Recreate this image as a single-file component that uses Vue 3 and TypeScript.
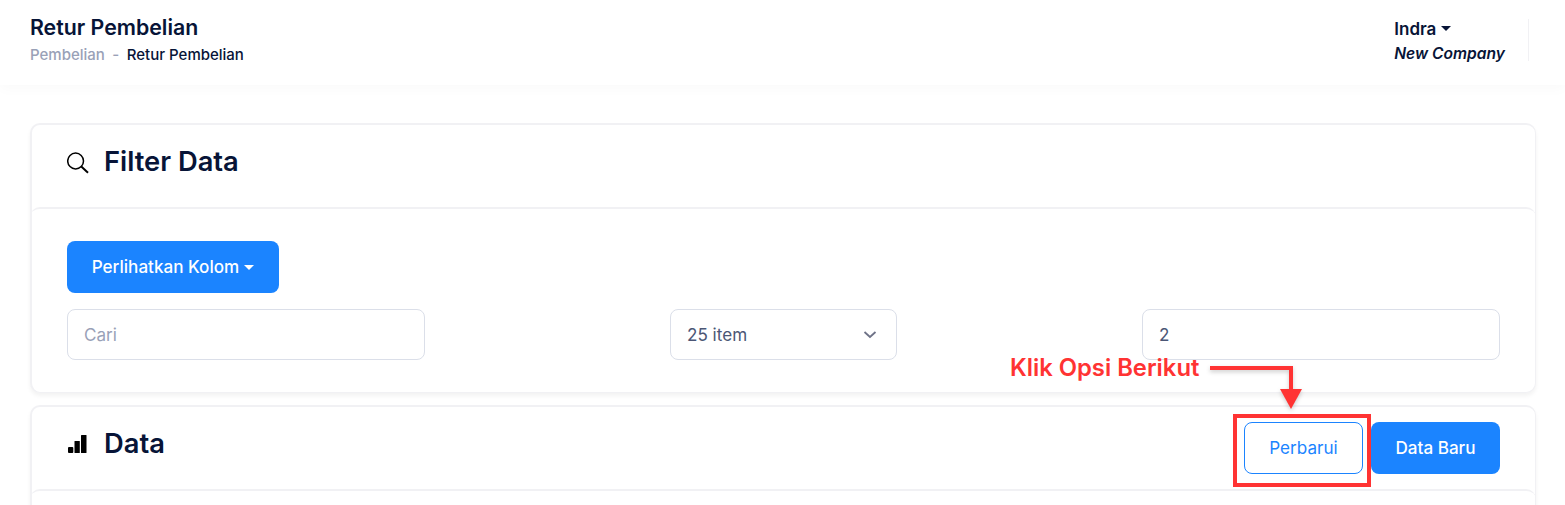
<script setup lang="ts">
import { ref } from "vue";

const search = ref("");
const page = ref("2");
</script>

<template>
  <div class="page">
    <header class="topbar">
      <div class="heading">
        <h1 class="page-title">Retur Pembelian</h1>
        <div class="crumbs">
          <span class="crumb-muted">Pembelian</span>
          <span class="crumb-dash">-</span>
          <span class="crumb-current">Retur Pembelian</span>
        </div>
      </div>
      <div class="account">
        <div class="account-text">
          <div class="user">Indra<i class="caret"></i></div>
          <div class="company">New Company</div>
        </div>
      </div>
    </header>

    <main class="content">
      <section class="card">
        <div class="card-head">
          <div class="card-title">
            <svg class="icon" width="24" height="24" viewBox="0 0 24 24" fill="none">
              <circle cx="8.600" cy="11" r="7.900" stroke="#000" stroke-width="1.500" />
              <path d="M14.300 16.600 L21 22.800" stroke="#000" stroke-width="2" />
            </svg>
            <h2>Filter Data</h2>
          </div>
        </div>
        <div class="card-body">
          <button class="btn btn-primary btn-columns">Perlihatkan Kolom<i class="caret caret-white"></i></button>
          <div class="filters">
            <input v-model="search" class="field field-wide" placeholder="Cari" />
            <div class="field field-select">
              <span>25 item</span>
              <svg width="16" height="16" viewBox="0 0 16 16" fill="none">
                <path d="M2.500 5 L8 10 L13.500 5" stroke="#6e7287" stroke-width="1.800" />
              </svg>
            </div>
            <input v-model="page" class="field field-wide" />
          </div>
        </div>
      </section>

      <section class="card card-data">
        <div class="card-head card-head-data">
          <div class="card-title">
            <svg class="icon" width="24" height="24" viewBox="0 0 24 24" fill="#000">
              <rect x="1" y="15" width="5.300" height="6" rx="1" />
              <rect x="7.500" y="9" width="5.300" height="12" rx="0.500" />
              <rect x="14" y="3" width="5.500" height="18" rx="0.500" />
            </svg>
            <h2>Data</h2>
          </div>
          <div class="actions">
            <button class="btn btn-outline">Perbarui</button>
            <button class="btn btn-primary btn-new">Data Baru</button>
          </div>
        </div>
        <div class="card-body card-body-data"></div>
      </section>
    </main>

    <!-- tutorial annotation drawn over the page -->
    <div class="note">Klik Opsi Berikut</div>
    <svg class="note-arrow" width="100" height="60" viewBox="0 0 100 60" fill="none">
      <path d="M3 11 H84 V34" stroke="#ff3333" stroke-width="4" />
      <path d="M73 32 H95 L84 52 Z" fill="#ff3333" />
    </svg>
    <div class="note-box"></div>
  </div>
</template>

<style>
html,
body {
  margin: 0;
  background: #fff;
  overflow: hidden;
}
</style>

<style scoped>
.page {
  position: relative;
  width: 1565px;
  height: 505px;
  overflow: hidden;
  font-family: Inter, "Liberation Sans", sans-serif;
  color: #071437;
  background: #fff;
}

.topbar {
  box-sizing: border-box;
  height: 85px;
  padding: 15px 36px 0 30px;
  display: flex;
  justify-content: space-between;
  align-items: flex-start;
  background: #fff;
  box-shadow: 0 4px 12px rgba(0, 0, 0, 0.025);
}

.page-title {
  margin: 0;
  font-size: 21.300px;
  line-height: 24px;
  font-weight: 600;
}

.crumbs {
  margin-top: 7px;
  display: flex;
  gap: 7.500px;
  font-size: 15px;
  line-height: 17px;
  font-weight: 500;
}

.crumb-muted,
.crumb-dash {
  color: #99a1b7;
}

.account {
  margin-top: 4px;
  height: 42px;
  padding-right: 23px;
  border-right: 1px solid #f1f1f4;
}

.user {
  font-size: 17px;
  line-height: 20px;
  font-weight: 600;
}

.company {
  margin-top: 5px;
  font-size: 15.600px;
  line-height: 20px;
  font-weight: 600;
  font-style: italic;
}

.caret {
  display: inline-block;
  margin-left: 5px;
  vertical-align: 4px;
  border-top: 5px solid #071437;
  border-left: 5px solid transparent;
  border-right: 5px solid transparent;
}

.caret-white {
  margin-left: 5px;
  vertical-align: 3px;
  border-top-color: #fff;
}

.content {
  padding: 38px 29px 0 30px;
  display: flex;
  flex-direction: column;
  gap: 12px;
}

.card {
  border: 1px solid #f1f1f4;
  border-width: 2px 1px 1px 2px;
  border-radius: 10px;
  background: #fff;
  box-shadow: 0 3px 4px rgba(0, 0, 0, 0.05);
}

.card-head {
  box-sizing: border-box;
  height: 82px;
  padding: 0 35px 9px 35px;
  display: flex;
  align-items: center;
}

.card-head-data {
  justify-content: space-between;
  align-items: flex-start;
  padding: 15px 35px 0 35px;
}

.card-title {
  display: flex;
  align-items: center;
  gap: 13px;
}

.card-head-data .card-title {
  margin-top: 7px;
}

.card-title h2 {
  margin: 0;
  font-size: 27.300px;
  line-height: 30px;
  font-weight: 600;
  color: #071437;
}

.icon {
  flex-shrink: 0;
}

.card-body {
  box-sizing: border-box;
  height: 185px;
  margin: 0 -1px 0 -2px;
  padding: 32px 36px 0 37px;
  border-top: 2px solid #f1f1f4;
  border-radius: 10px;
}

.card-body-data {
  height: 40px;
}

.btn {
  box-sizing: border-box;
  height: 52px;
  padding: 0 0 2px;
  border: 0;
  border-radius: 8px;
  font-family: inherit;
  font-size: 17.100px;
  font-weight: 500;
}

.btn-primary {
  color: #fff;
  background: #1b84ff;
}

.btn-columns {
  display: block;
  width: 212px;
}

.filters {
  margin-top: 16px;
  display: flex;
  justify-content: space-between;
}

.field {
  box-sizing: border-box;
  height: 51px;
  padding: 0 16px;
  border: 1px solid #dbdfe9;
  border-radius: 8px;
  background: #fff;
  font-family: inherit;
  font-size: 17.100px;
  font-weight: 400;
  color: #4b5675;
  outline: none;
}

.field::placeholder {
  color: #99a1b7;
  opacity: 1;
}

.field-wide {
  width: 358px;
}

.field-select {
  width: 227px;
  padding-right: 18px;
  display: flex;
  justify-content: space-between;
  align-items: center;
}

.actions {
  display: flex;
  gap: 8px;
}

.btn-outline {
  width: 119px;
  border: 1px solid #1b84ff;
  color: #1b84ff;
  background: #fff;
  font-weight: 400;
}

.btn-new {
  width: 129px;
}

.note {
  position: absolute;
  left: 1010px;
  top: 354px;
  font-size: 23.800px;
  line-height: 28px;
  font-weight: 600;
  color: #ff3333;
  white-space: nowrap;
}

.note-arrow {
  position: absolute;
  left: 1207px;
  top: 357px;
  filter: drop-shadow(0 2px 2px rgba(0, 0, 0, 0.2));
}

.note-box {
  position: absolute;
  left: 1233px;
  top: 414px;
  width: 138px;
  height: 73px;
  box-sizing: border-box;
  border: 4px solid #ff3333;
}
</style>
